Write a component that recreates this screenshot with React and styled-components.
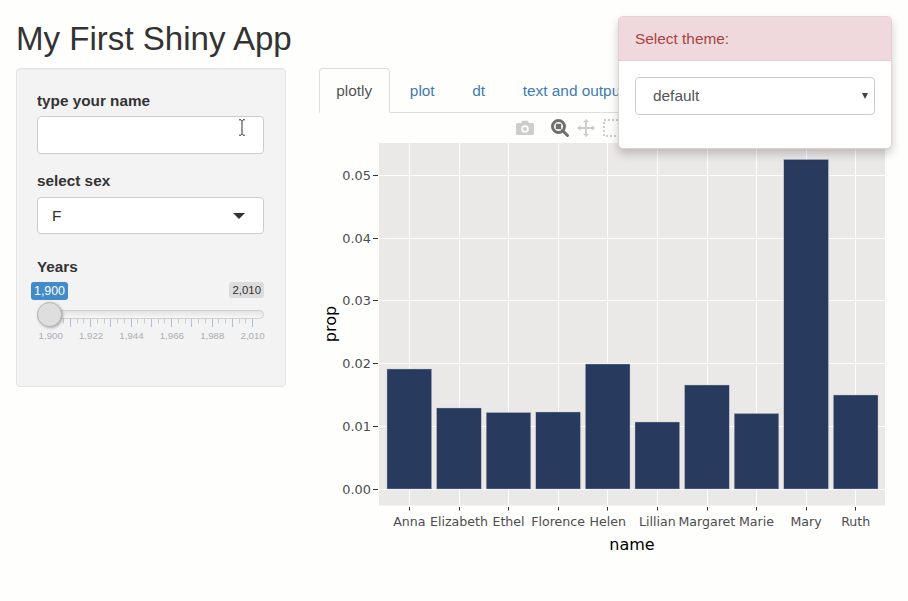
import React from 'react';
import styled, { createGlobalStyle } from 'styled-components';

const Global = createGlobalStyle`
  html, body { margin: 0; padding: 0; background: #fefefd; overflow: hidden; }
  body { font-family: "Liberation Sans", Arial, sans-serif; font-size: 15.4px; line-height: 20px; color: #333; }
  * { box-sizing: border-box; }
`;

const Page = styled.div`
  position: relative;
  width: 908px;
  height: 601px;
  padding: 0 16px;
`;
const Title = styled.h2`
  margin: 0;
  padding-top: 19px;
  height: 68px;
  font-size: 33.1px;
  line-height: 40px;
  font-weight: 400;
  color: #333;
`;
const Columns = styled.div`
  display: flex;
  align-items: flex-start;
  gap: 33px;
`;
const Sidebar = styled.aside`
  width: 270px;
  height: 319px;
  padding: 22px 21px 0 20px;
  background: #f3f3f3;
  border: 1px solid #e4e4e4;
  border-radius: 4px;
  box-shadow: inset 0 1px 1px rgba(0, 0, 0, 0.03);
  flex: none;
`;
const Field = styled.div`
  margin-bottom: ${p => p.$gap}px;
`;
const Label = styled.label`
  display: block;
  margin-bottom: ${p => p.$gap ?? 5}px;
  font-weight: 700;
  font-size: 15.3px;
  line-height: 20px;
  color: #333;
`;
const InputWrap = styled.div`
  position: relative;
  height: 38px;
`;
const TextInput = styled.input`
  display: block;
  width: 100%;
  height: 100%;
  border: 1px solid #ccc;
  border-radius: 4px;
  background: #fff;
  outline: none;
`;
const Cursor = styled.svg`
  position: absolute;
  left: 201px;
  top: 3px;
`;
const SelectBox = styled.div`
  display: flex;
  align-items: center;
  justify-content: space-between;
  height: 37px;
  padding: 0 18px 0 14px;
  border: 1px solid #ccc;
  border-radius: 4px;
  background: #fff;
  font-size: 15.4px;
  color: #333;
`;
const Caret = styled.span`
  width: 0;
  height: 0;
  border-left: 6px solid transparent;
  border-right: 6px solid transparent;
  border-top: 6px solid #333;
`;

const Slider = styled.div`
  position: relative;
  height: 70px;
  margin-left: -6px;
  width: 233px;
`;
const Bubbles = styled.div`
  display: flex;
  justify-content: space-between;
  align-items: flex-start;
  height: 28px;
`;
const Bubble = styled.span`
  padding: 0 3px;
  height: ${p => (p.$active ? 18 : 16)}px;
  border-radius: 3px;
  background: ${p => (p.$active ? '#428bca' : '#dcdcdc')};
  color: ${p => (p.$active ? '#fff' : '#333')};
  font-size: ${p => (p.$active ? 12.4 : 11.4)}px;
  line-height: ${p => (p.$active ? 18 : 16)}px;
`;
const Track = styled.div`
  height: 9px;
  margin-left: 6px;
  border: 1px solid #cfcfcf;
  border-radius: 5px;
  background: linear-gradient(#e4e4e4, #f6f6f6);
`;
const Handle = styled.div`
  position: absolute;
  left: 6px;
  top: 20px;
  width: 25px;
  height: 25px;
  border-radius: 50%;
  border: 1px solid #b5b5b5;
  background: #dedede;
  box-shadow: 1px 1px 3px rgba(0, 0, 0, 0.3);
`;
const Ticks = styled.svg`
  display: block;
  margin-left: 6px;
`;
const TickLabels = styled.div`
  display: flex;
  margin-left: -0.5px;
  margin-top: 2px;
  width: 260px;
`;
const TickLabel = styled.span`
  flex: none;
  width: 40.4px;
  text-align: center;
  font-size: 9.7px;
  line-height: 12px;
  color: #aaaeb3;
`;

const Main = styled.main`
  width: 573px;
  flex: none;
`;
const Tabs = styled.ul`
  display: flex;
  gap: 3px;
  margin: 0;
  padding: 0;
  list-style: none;
  height: 45px;
  border-bottom: 1px solid #ddd;
  white-space: nowrap;
`;
const Tab = styled.li`
  height: 45px;
  padding: 12px 16.3px;
  font-size: 15.4px;
  line-height: 20px;
  border: 1px solid ${p => (p.$active ? '#ddd' : 'transparent')};
  border-bottom-color: ${p => (p.$active ? '#fefefd' : 'transparent')};
  border-radius: 4px 4px 0 0;
  color: ${p => (p.$active ? '#555' : '#3f7cb0')};
  background: ${p => (p.$active ? '#fefefd' : 'transparent')};
`;
const Modebar = styled.div`
  display: flex;
  align-items: center;
  height: 30px;
  padding-left: 197px;
`;
const ModeIcon = styled.svg`
  flex: none;
  display: block;
  margin-right: ${p => p.$mr}px;
`;
const Chart = styled.svg`
  display: block;
`;

const Popover = styled.section`
  position: absolute;
  left: 618px;
  top: 16px;
  width: 274px;
  height: 133px;
  background: #fff;
  border: 1px solid #e6cdd2;
  border-radius: 5px;
  box-shadow: 0 5px 10px rgba(0, 0, 0, 0.2);
  overflow: hidden;
`;
const PopHeader = styled.header`
  height: 44px;
  padding: 12px 16px;
  background: #f0d9dd;
  border-bottom: 1px solid #e6ccd1;
  color: #a94442;
  font-size: 15.4px;
  line-height: 20px;
`;
const PopBody = styled.div`
  padding: 16px;
`;
const ThemeSelect = styled.div`
  display: flex;
  align-items: center;
  justify-content: space-between;
  height: 38px;
  padding: 0 6px 0 17px;
  border: 1px solid #ccc;
  border-radius: 4px;
  background: #fff;
  color: #555;
  font-size: 15.4px;
`;
const SmallCaret = styled.span`
  width: 0;
  height: 0;
  border-left: 3px solid transparent;
  border-right: 3px solid transparent;
  border-top: 6px solid #444;
`;

const names = ['Anna', 'Elizabeth', 'Ethel', 'Florence', 'Helen', 'Lillian', 'Margaret', 'Marie', 'Mary', 'Ruth'];
const tops = [369, 408, 412.5, 412, 364, 422, 385, 413.5, 159.5, 395];
const xs = names.map((_, i) => 409 + i * 49.6);
const yTicks = [['0.00', 489], ['0.01', 426], ['0.02', 363], ['0.03', 300], ['0.04', 238], ['0.05', 175]];
const sliderLabels = ['1,900', '1,922', '1,944', '1,966', '1,988', '2,010'];
const chartFont = "'DejaVu Sans', sans-serif";

const sliderTicks = () => {
  const out = [];
  for (let i = 0; i <= 30; i++) {
    const major = i % 3 === 0;
    const x = Math.round(12.5 + i * 6.75) + 0.5;
    out.push(
      <line key={i} x1={x} x2={x} y1={0} y2={major ? 8 : 4.5} stroke={major ? '#a9c0d8' : '#cccccc'} strokeWidth="1" />
    );
  }
  return out;
};

export default function App() {
  return (
    <Page>
      <Global />
      <Title>My First Shiny App</Title>
      <Columns>
        <Sidebar>
          <Field $gap={17}>
            <Label>type your name</Label>
            <InputWrap>
              <TextInput />
              <Cursor width="8" height="17" viewBox="0 0 8 17">
                <path d="M1 .8h2l1 1 1-1h2M4 1.8v13.4M1 16.2h2l1-1 1 1h2" fill="none" stroke="#333" strokeWidth="1" />
              </Cursor>
            </InputWrap>
          </Field>
          <Field $gap={23}>
            <Label $gap={6}>select sex</Label>
            <SelectBox>
              F
              <Caret />
            </SelectBox>
          </Field>
          <Field $gap={0}>
            <Label $gap={5}>Years</Label>
            <Slider>
              <Bubbles>
                <Bubble $active>1,900</Bubble>
                <Bubble>2,010</Bubble>
              </Bubbles>
              <Track />
              <Handle />
              <Ticks width="227" height="9" viewBox="0 0 227 9">{sliderTicks()}</Ticks>
              <TickLabels>
                {sliderLabels.map(l => <TickLabel key={l}>{l}</TickLabel>)}
              </TickLabels>
            </Slider>
          </Field>
        </Sidebar>
        <Main>
          <Tabs>
            <Tab $active>plotly</Tab>
            <Tab>plot</Tab>
            <Tab>dt</Tab>
            <Tab>text and output</Tab>
          </Tabs>
          <Modebar>
            <ModeIcon $mr={17} width="18" height="16" viewBox="0 0 18 16">
              <path fillRule="evenodd" fill="#cdcdcd" d="M1.5 3H5l1.2-2.2h5.6L13 3h3.5A1.5 1.5 0 0 1 18 4.5v9a1.5 1.5 0 0 1-1.5 1.5h-15A1.5 1.5 0 0 1 0 13.500v-9A1.500 1.500 0 0 1 1.500 3zM9 5.200a3.800 3.800 0 1 0 0 7.600 3.800 3.800 0 0 0 0-7.600zM9 7a2 2 0 1 1 0 4 2 2 0 0 1 0-4z" />
            </ModeIcon>
            <ModeIcon $mr={8} width="18" height="18" viewBox="0 0 18 18">
              <circle cx="7.500" cy="7.500" r="6" fill="none" stroke="#6f6f6f" strokeWidth="3" />
              <rect x="4.800" y="4.800" width="5.400" height="5.400" fill="#6f6f6f" />
              <path d="M11.500 11.500l5 5" stroke="#6f6f6f" strokeWidth="3" strokeLinecap="round" />
            </ModeIcon>
            <ModeIcon $mr={8} width="18" height="18" viewBox="0 0 18 18">
              <path fill="#cdcdcd" d="M9 0l3 3.300h-2.100v4.800h4.800V6L18 9l-3.300 3v-2.100H9.900v4.800H12L9 18l-3-3.300h2.100V9.900H3.300V12L0 9l3.300-3v2.100h4.800V3.300H6z" />
            </ModeIcon>
            <ModeIcon $mr={0} width="18" height="18" viewBox="0 0 18 18">
              <rect x="1" y="1" width="16" height="16" fill="none" stroke="#cdcdcd" strokeWidth="2" strokeDasharray="2 2" />
            </ModeIcon>
          </Modebar>
          <Chart width="573" height="420" viewBox="319 143 573 420">
            <rect x="379" y="143" width="506" height="362.500" fill="#ebe9e7" />
            {yTicks.map(([l, y]) => (
              <g key={l}>
                <rect x="379" width="506" y={y} height="1" fill="#fff" />
                <rect x="373" width="5" y={y} height="1" fill="#333" />
                <text x="371" y={y + 4.800} textAnchor="end" fontFamily={chartFont} fontSize="12.900" fill="#4d4d4d">{l}</text>
              </g>
            ))}
            {xs.map((x, i) => (
              <g key={names[i]}>
                <rect x={Math.round(x)} width="1" y="143" height="362.500" fill="#fff" />
                <rect x={Math.round(x)} width="1" y="507" height="3.500" fill="#333" />
              </g>
            ))}
            {xs.map((x, i) => (
              <rect key={names[i]} x={x - 22.000} y={tops[i]} width="44.600" height={489 - tops[i]} fill="#283b5e" stroke="#b9bec8" strokeWidth="0.400" />
            ))}
            {xs.map((x, i) => (
              <text key={names[i]} x={x + 0.3} y="525.500" textAnchor="middle" fontFamily={chartFont} fontSize="12.600" fill="#4d4d4d">{names[i]}</text>
            ))}
            <text x="632" y="549.500" textAnchor="middle" fontFamily={chartFont} fontSize="16" fill="#000">name</text>
            <text transform="translate(336 324) rotate(-90)" textAnchor="middle" fontFamily={chartFont} fontSize="16" fill="#000">prop</text>
          </Chart>
        </Main>
      </Columns>
      <Popover>
        <PopHeader>Select theme:</PopHeader>
        <PopBody>
          <ThemeSelect>
            default
            <SmallCaret />
          </ThemeSelect>
        </PopBody>
      </Popover>
    </Page>
  );
}
